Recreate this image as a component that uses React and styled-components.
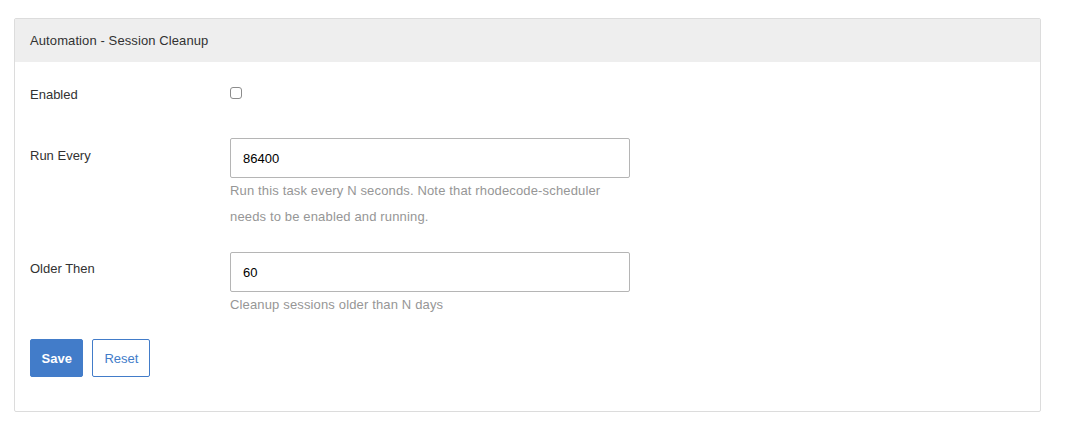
import React from "react";
import styled, { createGlobalStyle } from "styled-components";

const Global = createGlobalStyle`
  html, body { margin: 0; padding: 0; background: #ffffff; }
  body { font-family: "Liberation Sans", Arial, sans-serif; font-size: 13px; color: #323232; }
  * { box-sizing: border-box; }
`;

const Page = styled.div`
  padding: 18px 27px 0 14px;
`;

const Panel = styled.section`
  border: 1px solid #dcdcdc;
  border-radius: 2px;
  background: #fff;
`;

const PanelHeader = styled.div`
  background: #eeeeee;
  height: 43px;
  padding: 0 15px;
  display: flex;
  align-items: center;
  font-size: 13px;
  letter-spacing: 0.1px;
  color: #323232;
`;

const PanelBody = styled.form`
  padding: 23px 15px 34px;
  display: flex;
  flex-direction: column;
`;

const Row = styled.div`
  display: grid;
  grid-template-columns: 200px 400px;
  margin-top: ${(p) => p.$gap || 0}px;
`;

const Label = styled.label`
  line-height: 20px;
  padding-top: ${(p) => p.$pad || 0}px;
  color: #323232;
`;

const Field = styled.div`
  display: flex;
  flex-direction: column;
`;

const Check = styled.input.attrs({ type: "checkbox" })`
  appearance: none;
  margin: 2px 0 0 0;
  width: 12px;
  height: 12px;
  border: 1px solid #8c8c8c;
  border-radius: 3px;
  background: #fff;
`;

const TextInput = styled.input`
  height: 40px;
  width: 400px;
  border: 1px solid #b5b5b5;
  border-radius: 2px;
  padding: 0 12px;
  font-family: "Liberation Sans", Arial, sans-serif;
  font-size: 13px;
  color: #000;
  outline: none;
`;

const Help = styled.p`
  margin: 0;
  font-size: 13px;
  line-height: 26px;
  letter-spacing: 0.15px;
  color: #969696;
`;

const Actions = styled.div`
  display: flex;
  gap: 9px;
  margin-top: 21px;
`;

const Button = styled.button`
  height: 38px;
  padding: 0 ${(p) => (p.$primary ? 10.5 : 11)}px;
  border-radius: 2px;
  border: 1px solid #427cc9;
  background: ${(p) => (p.$primary ? "#427cc9" : "#ffffff")};
  color: ${(p) => (p.$primary ? "#ffffff" : "#427cc9")};
  font-family: "Liberation Sans", Arial, sans-serif;
  font-size: 13px;
  font-weight: ${(p) => (p.$primary ? 700 : 400)};
  cursor: pointer;
`;

export default function App() {
  return (
    <>
      <Global />
      <Page>
        <Panel>
          <PanelHeader>Automation - Session Cleanup</PanelHeader>
          <PanelBody onSubmit={(e) => e.preventDefault()}>
            <Row>
              <Label>Enabled</Label>
              <Field>
                <Check />
              </Field>
            </Row>
            <Row $gap={33}>
              <Label $pad={8}>Run Every</Label>
              <Field>
                <TextInput defaultValue="86400" />
                <Help>
                  Run this task every N seconds. Note that rhodecode-scheduler
                  <br />
                  needs to be enabled and running.
                </Help>
              </Field>
            </Row>
            <Row $gap={22}>
              <Label $pad={7}>Older Then</Label>
              <Field>
                <TextInput defaultValue="60" />
                <Help>Cleanup sessions older than N days</Help>
              </Field>
            </Row>
            <Actions>
              <Button $primary type="submit">Save</Button>
              <Button type="reset">Reset</Button>
            </Actions>
          </PanelBody>
        </Panel>
      </Page>
    </>
  );
}
